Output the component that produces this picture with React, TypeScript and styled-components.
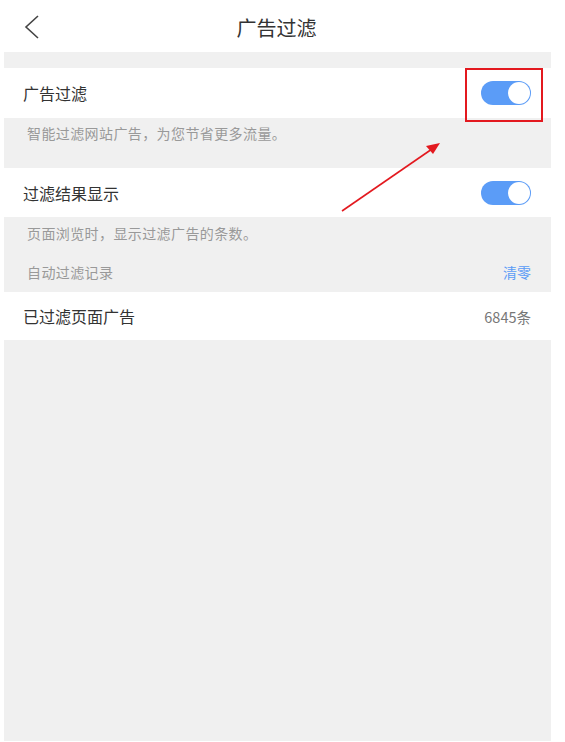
import React, { useState } from "react";
import styled, { createGlobalStyle } from "styled-components";

const GlobalStyle = createGlobalStyle`
  body {
    margin: 0;
    background: #fff;
    font-family: "Noto Sans CJK SC", "Noto Sans", sans-serif;
  }
`;

const Page = styled.div`
  position: relative;
  width: 565px;
  height: 742px;
  background: #fff;
  overflow: hidden;
`;

const Panel = styled.div`
  display: flex;
  flex-direction: column;
  width: 547px;
  height: 741px;
  margin-left: 4px;
  background: #f0f0f0;
`;

const Header = styled.div`
  display: grid;
  grid-template-columns: 60px 1fr 60px;
  align-items: center;
  height: 52px;
  margin-left: -4px;
  width: 551px;
  background: #fff;
`;

const BackButton = styled.div`
  display: flex;
  align-items: center;
  padding-left: 24px;
  padding-top: 2px;
  cursor: pointer;
`;

const Title = styled.div`
  text-align: center;
  font-size: 20px;
  color: #333;
  padding-top: 3px;
  padding-left: 2px;
`;

const Spacer = styled.div<{ h: number }>`
  height: ${(p) => p.h}px;
`;

const Row = styled.div<{ h?: number }>`
  position: relative;
  display: flex;
  align-items: center;
  justify-content: space-between;
  height: ${(p) => p.h || 49}px;
  padding: 0 20px 0 19px;
  background: #fff;
`;

const Label = styled.span`
  font-size: 16px;
  color: #333;
`;

const Value = styled.span`
  font-size: 14.5px;
  color: #777;
`;

const Note = styled.div<{ h: number }>`
  display: flex;
  align-items: flex-start;
  justify-content: space-between;
  height: ${(p) => p.h}px;
  padding: 5px 20px 0 23px;
  box-sizing: border-box;
  font-size: 14px;
  letter-spacing: 0.4px;
  color: #999;
`;

const NoteLine = styled.div`
  display: flex;
  justify-content: space-between;
  align-items: center;
  height: 28px;
`;

const NoteBlock = styled.div`
  display: flex;
  flex-direction: column;
  padding: 2px 20px 0 23px;
  height: 75px;
  box-sizing: border-box;
  font-size: 14px;
  letter-spacing: 0.4px;
  color: #999;
  gap: 11px;
`;

const ClearLink = styled.span`
  color: #5b9cf6;
  font-size: 14px;
  letter-spacing: 0;
  cursor: pointer;
`;

const Track = styled.button<{ on: boolean }>`
  position: relative;
  width: 50px;
  height: 24px;
  border: none;
  padding: 0;
  border-radius: 12px;
  background: ${(p) => (p.on ? "#5b9cf7" : "#ccc")};
  cursor: pointer;
`;

const Knob = styled.span<{ on: boolean }>`
  position: absolute;
  top: 1px;
  left: ${(p) => (p.on ? "27px" : "1px")};
  width: 22px;
  height: 22px;
  border-radius: 50%;
  background: #fff;
  transition: left 0.2s;
`;

const Highlight = styled.div`
  position: absolute;
  right: 8px;
  top: 0;
  width: 74px;
  height: 50px;
  border: 2px solid #e3191f;
  pointer-events: none;
`;

const Arrow = styled.svg`
  position: absolute;
  left: 0;
  top: 0;
  pointer-events: none;
`;

const Toggle = ({ initial }: { initial: boolean }) => {
  const [on, setOn] = useState(initial);
  return (
    <Track on={on} onClick={() => setOn(!on)}>
      <Knob on={on} />
    </Track>
  );
};

const App = () => {
  return (
    <Page>
      <GlobalStyle />
      <Panel>
        <Header>
          <BackButton>
            <svg width="16" height="24" viewBox="0 0 16 24">
              <path d="M14 1 L2 12 L14 23" fill="none" stroke="#444" strokeWidth="1.6" />
            </svg>
          </BackButton>
          <Title>广告过滤</Title>
          <div />
        </Header>
        <Spacer h={16} />
        <Row h={50}>
          <Label>广告过滤</Label>
          <Toggle initial={true} />
          <Highlight />
        </Row>
        <Note h={50}>智能过滤网站广告，为您节省更多流量。</Note>
        <Row>
          <Label>过滤结果显示</Label>
          <Toggle initial={true} />
        </Row>
        <NoteBlock>
          <NoteLine>页面浏览时，显示过滤广告的条数。</NoteLine>
          <NoteLine>
            <span>自动过滤记录</span>
            <ClearLink>清零</ClearLink>
          </NoteLine>
        </NoteBlock>
        <Row h={48}>
          <Label>已过滤页面广告</Label>
          <Value>6845条</Value>
        </Row>
      </Panel>
      <Arrow width="565" height="742">
        <line x1="342" y1="211" x2="432" y2="149" stroke="#e3191f" strokeWidth="1.6" />
        <polygon points="440,143 426,146 433,154" fill="#e3191f" />
      </Arrow>
    </Page>
  );
};

export default App;
